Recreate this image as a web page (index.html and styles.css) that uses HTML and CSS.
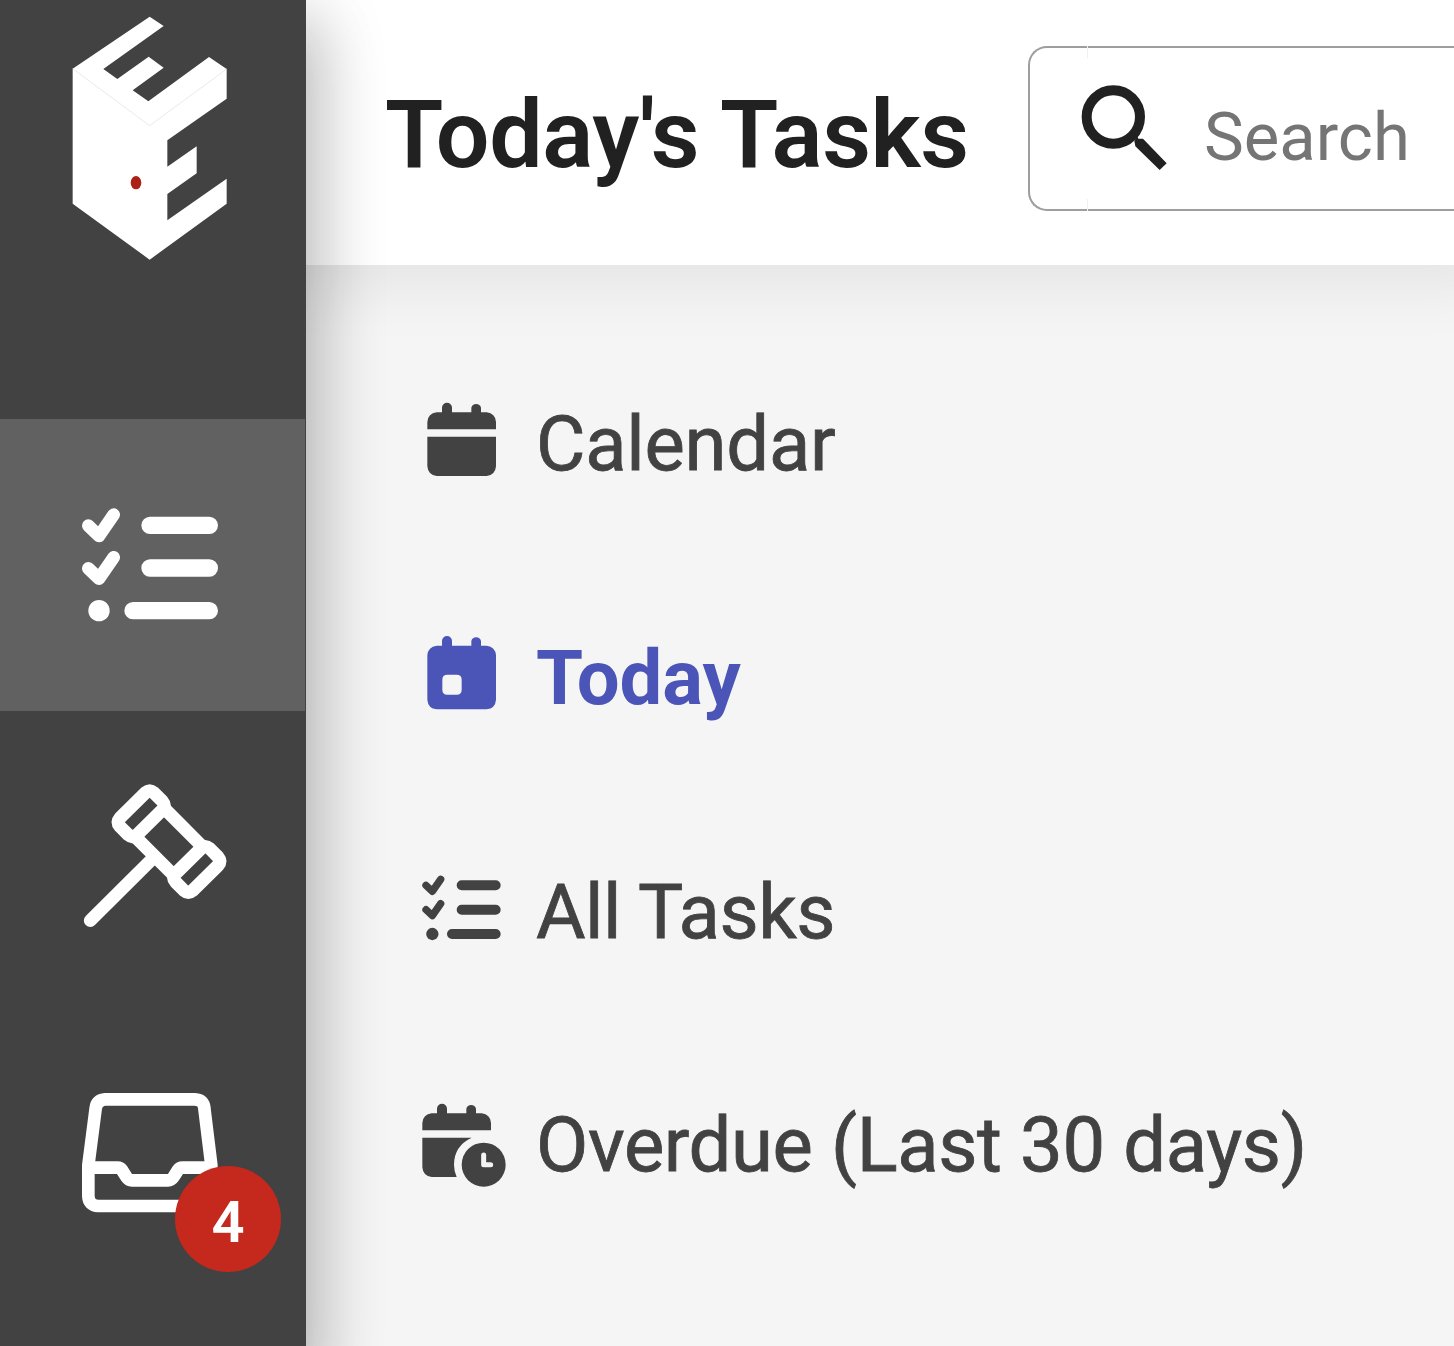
FILE: index.html
```html
<!DOCTYPE html>
<html lang="en">
<head>
  <meta charset="UTF-8">
  <meta name="viewport" content="width=device-width, initial-scale=1.0">
  <title>Today's Tasks</title>
  <link rel="stylesheet" href="styles.css">
</head>
<body>
  <nav class="sidebar">
    <a class="logo" href="#">
      <svg width="156" height="246" viewBox="66 47 468 738">
        <path fill="#fff" d="M68 205L299 49L341 77L160 206L202 236L296 169L341 202L248 270L295 303L477 170L530 206V295L352 420V499L440 438V519L352 581V660L530 535V610L299 778L68 610Z"/>
        <path fill="none" stroke="#dedede" stroke-width="2" d="M68 205L299 376L530 206"/>
        <ellipse fill="#ab2117" cx="258" cy="547" rx="16" ry="20"/>
      </svg>
    </a>

    <a class="nav-item active" href="#">
      <svg width="200" height="160" viewBox="9 14 600 480">
        <g fill="none" stroke="#fff" stroke-linecap="round" stroke-linejoin="round">
          <path stroke-width="38" d="M115 136L147 167L191 103M115 264L147 295L191 231"/>
          <path stroke-width="52" d="M300 135H478M300 263H478M249 391H478"/>
        </g>
        <circle fill="#fff" cx="147" cy="391" r="32"/>
      </svg>
    </a>

    <a class="nav-item" href="#">
      <svg width="200" height="180" viewBox="-21 -6.5 600 540">
        <g fill="none" stroke="#fff" stroke-width="39" stroke-linecap="round" stroke-linejoin="round">
          <path d="M91 451L278 265"/>
          <path d="M318 120L424 226M232 206L336 310" stroke-linecap="butt"/>
          <path d="M256 68Q269 57 282 68L307 93Q318 106 307 119L231 194Q218 205 205 194L180 169Q169 156 180 143Z"/>
          <path d="M423 235Q436 224 449 235L474 260Q485 273 474 286L398 361Q385 372 372 361L347 336Q336 323 347 310Z"/>
        </g>
      </svg>
    </a>

    <a class="nav-item" href="#">
      <svg width="200" height="180" viewBox="-21 -30 600 540">
        <g fill="none" stroke="#fff" stroke-width="38" stroke-linejoin="round">
          <path d="M136 88H404Q431 90 433 115L454 286V378Q452 407 424 408H115Q86 406 85 378V286L107 115Q110 90 136 88Z"/>
          <path d="M85 293H173Q181 293 186 300L200 322Q206 331 216 331H324Q334 331 340 322L354 300Q359 293 367 293H454"/>
        </g>
      </svg>
      <span class="badge">4</span>
    </a>
  </nav>

  <main class="content">
    <header class="toolbar">
      <h1>Today's Tasks</h1>
      <div class="search">
        <svg class="search-icon" width="90" height="90" viewBox="206 157 270 270">
          <circle cx="309" cy="259" r="80" fill="none" stroke="#212121" stroke-width="30"/>
          <path fill="#212121" d="M372 331L381 317L384 324H398L469 398L448 418L375 347Z"/>
        </svg>
        <span class="placeholder">Search</span>
      </div>
    </header>

    <ul class="task-list">
      <li>
        <svg width="98" height="98" viewBox="39 45 294 294">
          <path d="M82 148V126Q84 100 110 97H126V83A15 15 0 0 1 156 83V97H214V83A15 15 0 0 1 243 83V97H260Q286 100 288 126V148ZM82 170H288V259Q286 285 260 288H110Q84 285 82 259Z"/>
        </svg>
        <span class="label calendar">Calendar</span>
      </li>
      <li class="selected">
        <svg width="98" height="98" viewBox="39 26 294 294">
          <path fill-rule="evenodd" d="M82 105Q84 79 110 76H126V62A15 15 0 0 1 156 62V76H214V62A15 15 0 0 1 243 62V76H260Q286 79 288 105V238Q286 264 260 267H110Q84 264 82 238ZM142 163Q127 163 127 178V208Q127 223 142 223H170Q185 223 185 208V178Q185 163 170 163Z"/>
        </svg>
        <span class="label today">Today</span>
      </li>
      <li>
        <svg width="98" height="98" viewBox="39 6 294 294">
          <g fill="none" stroke="currentColor" stroke-linecap="round" stroke-linejoin="round">
            <path stroke-width="22" d="M78 76L97 94L122 58M78 149L97 167L122 131"/>
            <path stroke-width="30" d="M185 76H287M185 149H287M156 222H287"/>
          </g>
          <circle cx="97" cy="222" r="18.5"/>
        </svg>
        <span class="label all">All Tasks</span>
      </li>
      <li>
        <svg width="98" height="98" viewBox="39 18 294 294">
          <path d="M67 121V99Q69 73 95 70H111V56A15 15 0 0 1 141 56V70H199V56A15 15 0 0 1 228 56V70H245Q271 73 273 99V121ZM67 143H215Q162 168 162 224Q162 243 170 261H95Q69 258 67 232Z"/>
          <circle cx="251" cy="224" r="66"/>
          <path fill="none" stroke="#f4f4f4" stroke-width="15" stroke-linecap="round" stroke-linejoin="round" d="M251 195V224H272"/>
        </svg>
        <span class="label overdue">Overdue (Last 30 days)</span>
      </li>
    </ul>
  </main>
</body>
</html>
```
FILE: styles.css
```css
* {
  box-sizing: border-box;
}

body {
  margin: 0;
  display: flex;
  height: 1346px;
  overflow: hidden;
  font-family: Roboto, sans-serif;
  background-color: #f5f5f5;
  color: #424242;
}

svg {
  display: block;
  flex: none;
  fill: currentColor;
}

/* Sidebar */
.sidebar {
  position: relative;
  z-index: 2;
  flex: none;
  width: 306px;
  background-color: #424242;
  box-shadow: 0 39px 24px -15px rgba(0, 0, 0, 0.1),
    0 40px 58px 14px rgba(0, 0, 0, 0.16),
    0 24px 68px 15px rgba(0, 0, 0, 0.12);
}

.logo {
  display: block;
  height: 419px;
  padding: 15.5px 0 0 72px;
}

.nav-item {
  position: relative;
  display: flex;
  align-items: center;
  justify-content: center;
  width: 305px;
  height: 292.4px;
}

.nav-item.active {
  background-color: #616161;
}

.badge {
  position: absolute;
  left: 175px;
  top: 162px;
  width: 106px;
  height: 106px;
  border-radius: 50%;
  background-color: #c5281c;
  color: #fff;
  font-size: 58px;
  font-weight: 600;
  line-height: 112px;
  text-align: center;
}

/* Toolbar */
.content {
  flex: 1;
  min-width: 0;
}

.toolbar {
  display: flex;
  align-items: flex-start;
  height: 265px;
  padding-left: 79px;
  background-color: #fff;
  box-shadow: 0 -15px 60px 34px rgba(0, 0, 0, 0.075);
}

h1 {
  flex: none;
  width: 643px;
  margin: 79px 0 0;
  font-size: 95px;
  font-weight: 600;
  letter-spacing: -0.4px;
  line-height: 112px;
  white-space: nowrap;
  color: #212121;
}

.search {
  position: relative;
  flex: 1;
  min-width: 0;
  display: flex;
  height: 165px;
  margin-top: 46px;
  padding: 34.5px 0 0 49px;
  border: 2.5px solid #9e9e9e;
  border-right: none;
  border-radius: 19px 0 0 19px;
}

/* seam of the outline notch */
.search::before {
  content: "";
  position: absolute;
  left: 57px;
  top: -2px;
  width: 1px;
  height: 165px;
  background: linear-gradient(#f1f1f1 12px, transparent 12px, transparent 153px, #f1f1f1 153px);
}

.placeholder {
  margin: 14px 0 0 35px;
  font-size: 67px;
  line-height: 80px;
  color: #757575;
}

/* Task list */
.task-list {
  margin: 0;
  padding: 62px 0 0 107px;
  list-style: none;
}

.task-list li {
  display: flex;
  align-items: center;
  gap: 25px;
  height: 233.7px;
}

.label {
  padding-top: 1px;
  font-size: 76px;
  line-height: 90px;
  white-space: nowrap;
  -webkit-text-stroke: 0.8px currentColor;
}

.calendar {
  letter-spacing: -0.25px;
}

.all {
  letter-spacing: -0.5px;
}

.overdue {
  letter-spacing: -0.36px;
}

.selected {
  color: #4a55b7;
}

.selected .label {
  padding-top: 0;
  font-weight: 700;
  -webkit-text-stroke: 0;
}
```
